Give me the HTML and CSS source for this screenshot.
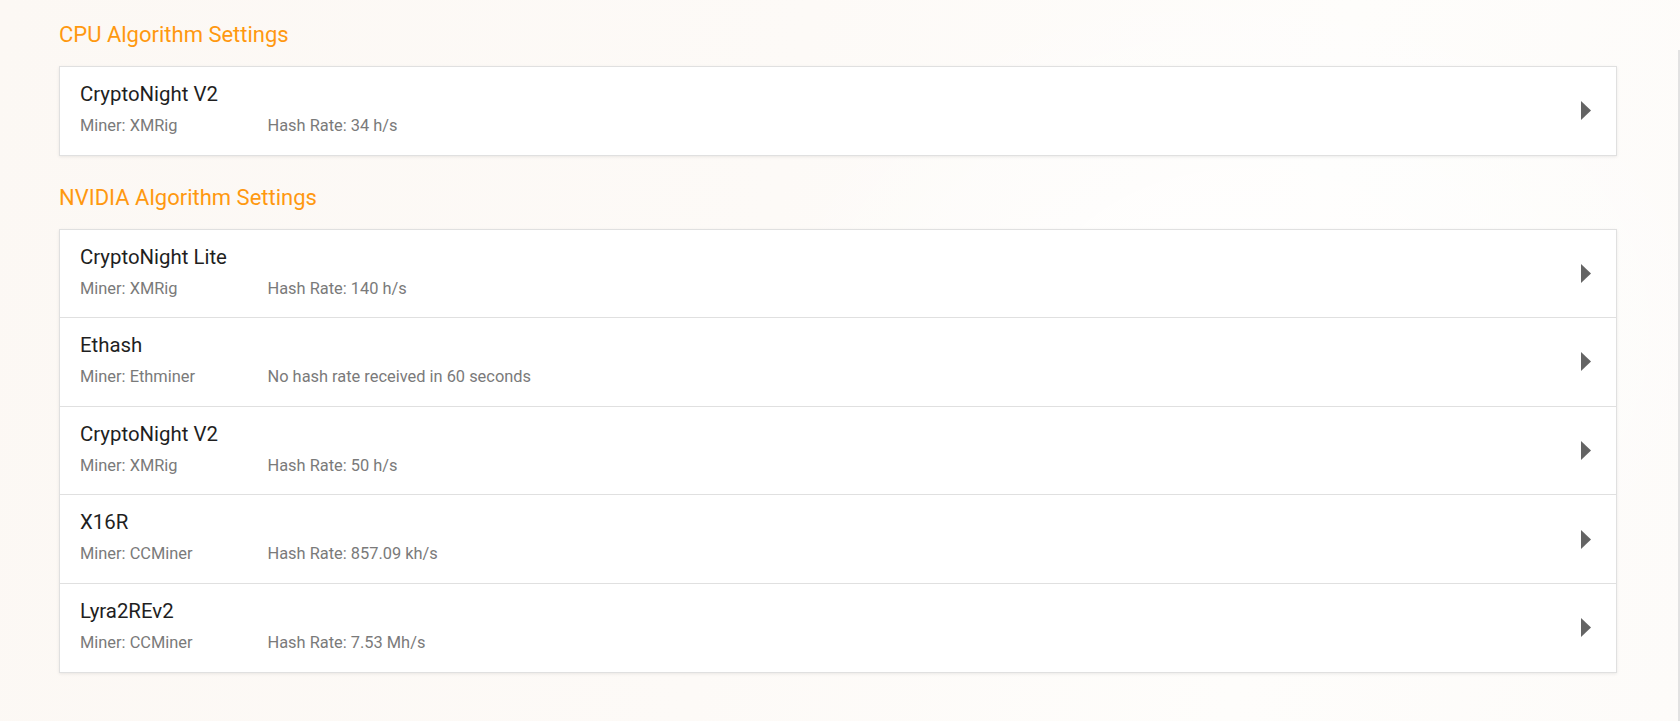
FILE: index.html
```html
<!DOCTYPE html>
<html lang="en">
<head>
<meta charset="utf-8">
<title>Algorithm Settings</title>
<link rel="stylesheet" href="styles.css">
</head>
<body>
<div class="page">
  <main class="content">
    <section class="group">
      <h2 class="group-title">CPU Algorithm Settings</h2>
      <div class="card">
        <div class="row">
          <div class="row-text">
            <div class="algo">CryptoNight V2</div>
            <div class="meta"><span class="miner">Miner: XMRig</span><span class="rate">Hash Rate: 34 h/s</span></div>
          </div>
          <svg class="chevron" width="10" height="19" viewBox="0 0 10 19"><polygon points="0,0 10,9.5 0,19"/></svg>
        </div>
      </div>
    </section>

    <section class="group">
      <h2 class="group-title">NVIDIA Algorithm Settings</h2>
      <div class="card">
        <div class="row">
          <div class="row-text">
            <div class="algo">CryptoNight Lite</div>
            <div class="meta"><span class="miner">Miner: XMRig</span><span class="rate">Hash Rate: 140 h/s</span></div>
          </div>
          <svg class="chevron" width="10" height="19" viewBox="0 0 10 19"><polygon points="0,0 10,9.5 0,19"/></svg>
        </div>
        <div class="row">
          <div class="row-text">
            <div class="algo">Ethash</div>
            <div class="meta"><span class="miner">Miner: Ethminer</span><span class="rate">No hash rate received in 60 seconds</span></div>
          </div>
          <svg class="chevron" width="10" height="19" viewBox="0 0 10 19"><polygon points="0,0 10,9.5 0,19"/></svg>
        </div>
        <div class="row">
          <div class="row-text">
            <div class="algo">CryptoNight V2</div>
            <div class="meta"><span class="miner">Miner: XMRig</span><span class="rate">Hash Rate: 50 h/s</span></div>
          </div>
          <svg class="chevron" width="10" height="19" viewBox="0 0 10 19"><polygon points="0,0 10,9.5 0,19"/></svg>
        </div>
        <div class="row">
          <div class="row-text">
            <div class="algo">X16R</div>
            <div class="meta"><span class="miner">Miner: CCMiner</span><span class="rate">Hash Rate: 857.09 kh/s</span></div>
          </div>
          <svg class="chevron" width="10" height="19" viewBox="0 0 10 19"><polygon points="0,0 10,9.5 0,19"/></svg>
        </div>
        <div class="row">
          <div class="row-text">
            <div class="algo">Lyra2REv2</div>
            <div class="meta"><span class="miner">Miner: CCMiner</span><span class="rate">Hash Rate: 7.53 Mh/s</span></div>
          </div>
          <svg class="chevron" width="10" height="19" viewBox="0 0 10 19"><polygon points="0,0 10,9.5 0,19"/></svg>
        </div>
      </div>
    </section>
  </main>
  <div class="edge"></div>
</div>
</body>
</html>
```

FILE: styles.css
```css
html, body {
  margin: 0;
  height: 100%;
}

body {
  font-family: Roboto, "Liberation Sans", Arial, sans-serif;
  background:
    radial-gradient(ellipse 700px 520px at 1250px 330px, rgba(255,255,255,0.9), rgba(255,255,255,0) 70%),
    linear-gradient(100deg, #fcf8f4 0%, #fdfaf7 45%, #fefdfb 75%, #fdfbf9 100%);
  overflow: hidden;
}

.page {
  display: flex;
  min-height: 100%;
}

.content {
  flex: 1;
  padding: 22px 61px 0 59px;
}

/* thin rule down the right edge of the window */
.edge {
  width: 2px;
  margin-top: 50px;
  background: #e2e2e2;
}

.group + .group {
  margin-top: 29px;
}

.group-title {
  margin: 0 0 19px;
  font-size: 22px;
  line-height: 25px;
  font-weight: 400;
  color: #ff9810;
}

.card {
  background: #fff;
  border: 1px solid #e0e0e0;
  box-shadow: 0 1px 3px rgba(0, 0, 0, 0.08);
}

.row {
  display: flex;
  align-items: center;
  height: 87.6px;
  box-sizing: border-box;
  padding: 0 25px 0 20px;
}

.row + .row {
  border-top: 1px solid #e0e0e0;
  height: 88.6px;
}

.row-text {
  flex: 1;
  padding-bottom: 3.5px;
}

.algo {
  font-size: 20.4px;
  line-height: 24px;
  color: #1f1f1f;
}

.meta {
  display: flex;
  margin-top: 10px;
  font-size: 16.4px;
  line-height: 20px;
  color: #7a7a7a;
}

.miner {
  width: 187.5px;
  flex: none;
}

.chevron {
  flex: none;
  fill: #646464;
}
```
